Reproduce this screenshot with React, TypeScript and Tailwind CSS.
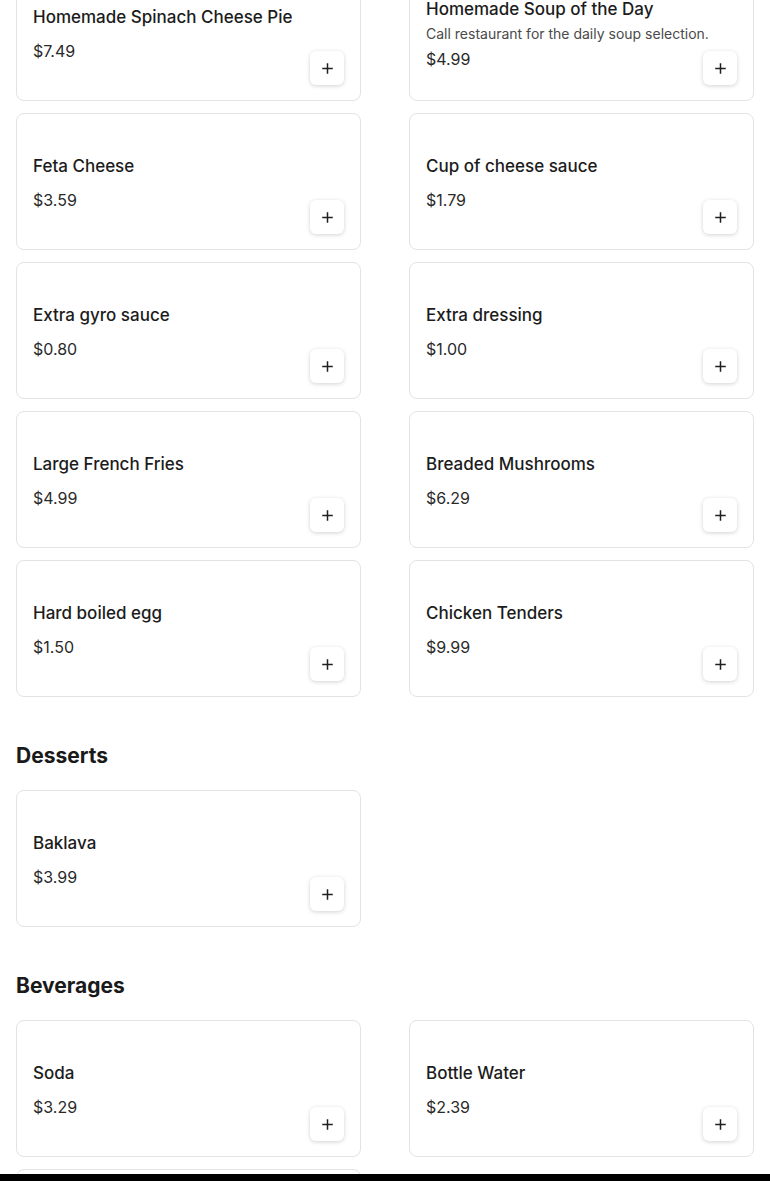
import React from "react";

type Item = { name: string; price: string; desc?: string };

const rows1: Item[] = [
  { name: "Homemade Spinach Cheese Pie", price: "$7.49" },
  { name: "Homemade Soup of the Day", price: "$4.99", desc: "Call restaurant for the daily soup selection." },
  { name: "Feta Cheese", price: "$3.59" },
  { name: "Cup of cheese sauce", price: "$1.79" },
  { name: "Extra gyro sauce", price: "$0.80" },
  { name: "Extra dressing", price: "$1.00" },
  { name: "Large French Fries", price: "$4.99" },
  { name: "Breaded Mushrooms", price: "$6.29" },
  { name: "Hard boiled egg", price: "$1.50" },
  { name: "Chicken Tenders", price: "$9.99" },
];

const desserts: Item[] = [{ name: "Baklava", price: "$3.99" }];
const beverages: Item[] = [
  { name: "Soda", price: "$3.29" },
  { name: "Bottle Water", price: "$2.39" },
  { name: "", price: "" },
];

function Plus() {
  return (
    <svg width="11" height="11" viewBox="0 0 11 11" fill="none">
      <path d="M5.5 1v9M1 5.5h9" stroke="#1f1f1f" strokeWidth="1.5" strokeLinecap="square" />
    </svg>
  );
}

function Card({ item }: { item: Item }) {
  return (
    <div className="grid h-[137px] rounded-lg border border-[#e3e3e3] bg-white pb-[15px] pl-[16px] pr-4 pt-[17px]">
      {item.name && (
        <>
          <div className="col-start-1 row-start-1 self-center">
            <div className="text-[17px] font-medium leading-6 text-[#1c1c1c]">{item.name}</div>
            {item.desc && (
              <div className="mt-[3px] text-[14px] leading-5 text-[#4a4a4a]">{item.desc}</div>
            )}
            <div className={`${item.desc ? "mt-[3px]" : "mt-[10px]"} text-[16px] leading-6 text-[#2a2a2a]`}>
              {item.price}
            </div>
          </div>
          <button className="col-start-1 row-start-1 flex h-[34px] w-[34px] items-center justify-center self-end justify-self-end rounded-md bg-white shadow-[0_1px_4px_rgba(0,0,0,0.18)]">
            <Plus />
          </button>
        </>
      )}
    </div>
  );
}

function Grid({ items, className = "" }: { items: Item[]; className?: string }) {
  return (
    <div className={`grid grid-cols-2 gap-x-12 gap-y-3 ${className}`}>
      {items.map((it, i) => (
        <Card key={i} item={it} />
      ))}
    </div>
  );
}

function Heading({ children }: { children: React.ReactNode }) {
  return (
    <h2 className="mt-[45px] mb-[20px] text-[21px] font-bold leading-7 text-[#1a1a1a]">{children}</h2>
  );
}

export default function App() {
  return (
    <div
      className="min-h-screen overflow-hidden bg-white px-4"
      style={{ fontFamily: "Inter, 'Noto Sans', sans-serif" }}
    >
      <Grid items={rows1} className="mt-[-36px]" />
      <Heading>Desserts</Heading>
      <Grid items={desserts} />
      <Heading>Beverages</Heading>
      <Grid items={beverages} />
      <div className="fixed inset-x-0 bottom-0 h-[7px] bg-black" />
    </div>
  );
}
